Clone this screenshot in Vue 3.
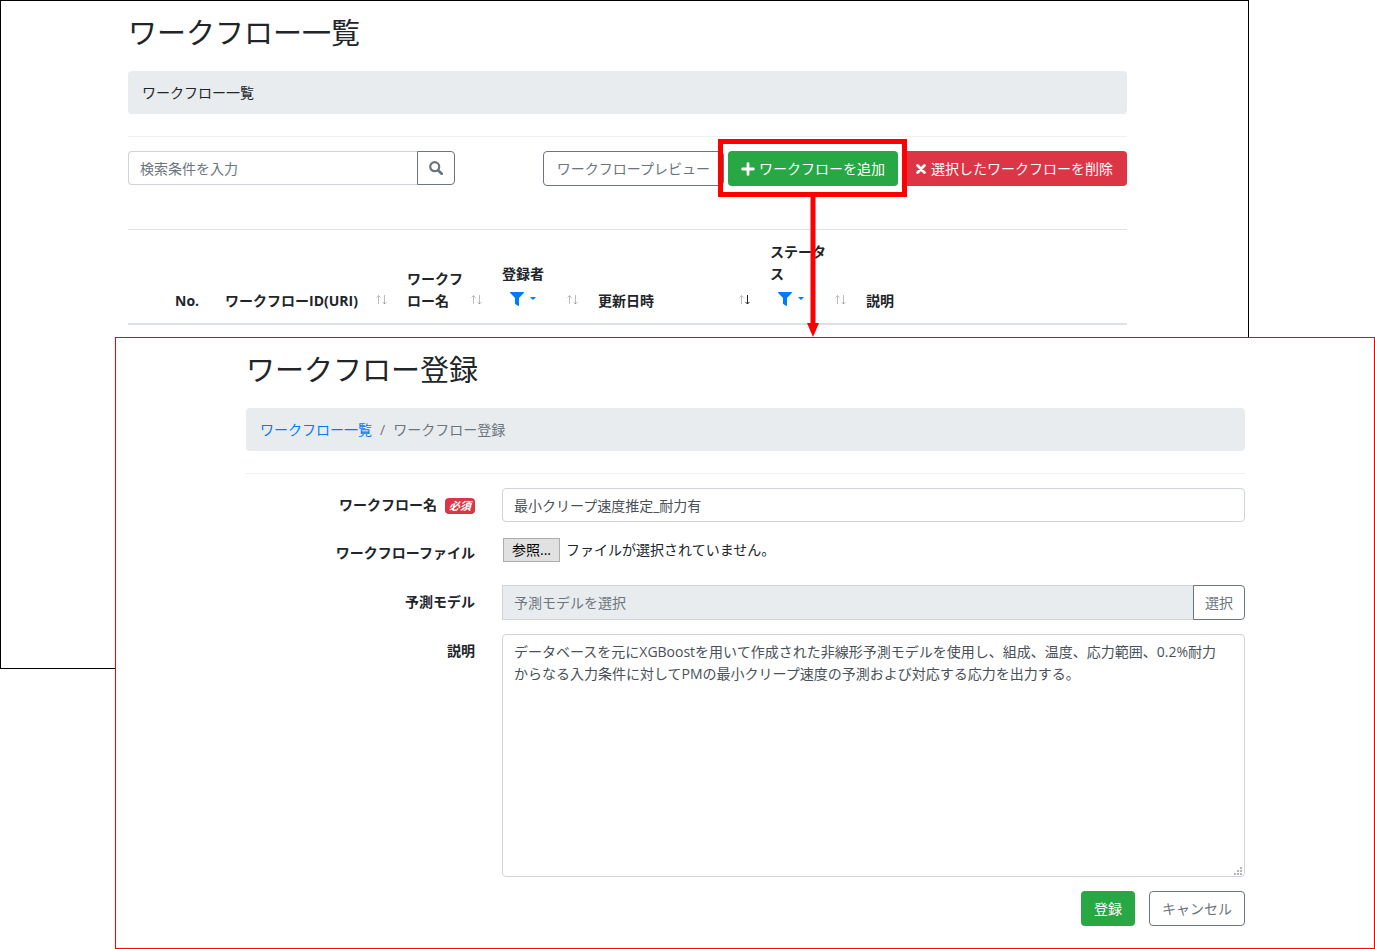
<script setup>
import { ref } from 'vue'

const keyword = ref('')
const name = ref('最小クリープ速度推定_耐力有')
const model = ref('')
const description = ref(
  'データベースを元にXGBoostを用いて作成された非線形予測モデルを使用し、組成、温度、応力範囲、0.2%耐力\nからなる入力条件に対してPMの最小クリープ速度の予測および対応する応力を出力する。'
)

const columns = [
  { key: 'check', label: '' },
  { key: 'no', label: 'No.' },
  { key: 'uri', label: 'ワークフローID(URI)', sort: 'none' },
  { key: 'name', label: 'ワークフロー名', sort: 'none' },
  { key: 'owner', label: '登録者', sort: 'none', filter: true },
  { key: 'updated', label: '更新日時', sort: 'desc' },
  { key: 'status', label: 'ステータス', sort: 'none', filter: true },
  { key: 'note', label: '説明' }
]
</script>

<template>
  <main class="stage">
    <section class="panel list-panel">
      <h1>ワークフロー一覧</h1>
      <nav class="breadcrumb" aria-label="現在位置"><span>ワークフロー一覧</span></nav>
      <hr />
      <div class="toolbar">
        <div class="search">
          <input v-model="keyword" type="text" placeholder="検索条件を入力" aria-label="検索条件" />
          <button type="button" class="btn outline" aria-label="検索">
            <svg width="14" height="14" viewBox="0 0 14 14" fill="none" stroke="currentColor">
              <circle cx="5.7" cy="5.7" r="4.5" stroke-width="2.2" />
              <path d="M9.2 9.2L12.7 12.7" stroke-width="2.7" stroke-linecap="round" />
            </svg>
          </button>
        </div>
        <div class="actions">
          <button type="button" class="btn outline">ワークフロープレビュー</button>
          <div class="callout">
            <button type="button" class="btn green">
              <svg width="14" height="14" viewBox="0 0 14 14" stroke="currentColor" stroke-width="2.8" stroke-linecap="round">
                <path d="M7 1.6V12.4M1.6 7H12.4" />
              </svg>
              <span>ワークフローを追加</span>
            </button>
            <svg class="arrow" width="12" height="140" viewBox="0 0 12 140" fill="#f00">
              <path d="M3.5 0H8.5V126H12L6 140L0 126H3.5Z" />
            </svg>
          </div>
          <button type="button" class="btn red">
            <svg width="10" height="10" viewBox="0 0 10 10" stroke="currentColor" stroke-width="2.8" stroke-linecap="round">
              <path d="M1.6 1.6L8.4 8.4M8.4 1.6L1.6 8.4" />
            </svg>
            <span>選択したワークフローを削除</span>
          </button>
        </div>
      </div>
      <table>
        <thead>
          <tr>
            <th v-for="c in columns" :key="c.key" :class="c.key" scope="col">
              <div class="head">
                <div class="label">
                  {{ c.label }}
                  <button v-if="c.filter" type="button" class="filter" :aria-label="c.label + 'で絞り込み'">
                    <svg width="14" height="14" viewBox="0 0 14 14" fill="currentColor">
                      <path d="M.7 0H13.3C13.9 0 14.2.7 13.8 1.1L9 6V13.2C9 13.8 8.3 14.2 7.8 13.8L5.4 12.1C5.1 11.9 5 11.7 5 11.4V6L.2 1.1C-.2.7.1 0 .7 0Z" />
                    </svg>
                    <svg width="6" height="3" viewBox="0 0 6 3" fill="currentColor"><path d="M0 0H6L3 3Z" /></svg>
                  </button>
                </div>
                <svg v-if="c.sort" class="sort" width="13" height="12" viewBox="0 0 13 12" fill="none" stroke="#212529">
                  <path d="M3.5 10V2M1.5 3.5L3.5 1.5L5.5 3.5" opacity=".3" />
                  <path d="M9.5 1V10M7.5 8L9.5 10L11.5 8" :opacity="c.sort === 'desc' ? 1 : 0.3" />
                </svg>
              </div>
            </th>
          </tr>
        </thead>
      </table>
    </section>

    <section class="panel form-panel">
      <h1>ワークフロー登録</h1>
      <nav class="breadcrumb" aria-label="パンくず">
        <a href="#">ワークフロー一覧</a><span class="sep">/</span><span class="muted">ワークフロー登録</span>
      </nav>
      <hr />
      <form @submit.prevent>
        <label for="wf-name">ワークフロー名<em class="badge">必須</em></label>
        <input id="wf-name" v-model="name" type="text" />

        <label for="wf-file">ワークフローファイル</label>
        <div class="file">
          <input id="wf-file" type="file" />
          <label for="wf-file"><span class="browse">参照...</span><span>ファイルが選択されていません。</span></label>
        </div>

        <label for="wf-model">予測モデル</label>
        <div class="group">
          <input id="wf-model" v-model="model" type="text" placeholder="予測モデルを選択" readonly />
          <button type="button" class="btn outline">選択</button>
        </div>

        <label for="wf-note">説明</label>
        <div class="area">
          <textarea id="wf-note" v-model="description"></textarea>
          <svg class="grip" width="8" height="8" viewBox="0 0 8 8" fill="#b5b5b5">
            <path d="M6 0h2v2H6zM3 3h2v2H3zM6 3h2v2H6zM0 6h2v2H0zM3 6h2v2H3zM6 6h2v2H6z" />
          </svg>
        </div>

        <div class="submit">
          <button type="submit" class="btn green">登録</button>
          <button type="button" class="btn outline">キャンセル</button>
        </div>
      </form>
    </section>
  </main>
</template>

<style>
body {
  background: #fff;
}
</style>

<style scoped>
* {
  box-sizing: border-box;
}
.stage {
  display: grid;
  grid-template-columns: 115px minmax(0, 1fr) 126px;
  grid-template-rows: 337px 332px auto;
  font-family: 'Open Sans', 'Noto Sans CJK JP', sans-serif;
  font-size: 14px;
  line-height: 22px;
  color: #212529;
}
.panel {
  background: #fff;
}
.list-panel {
  grid-area: 1 / 1 / 3 / 3;
  border: 1px solid #000;
  padding: 14px 121px 0 127px;
}
.form-panel {
  grid-area: 2 / 2 / 4 / 4;
  border: 1px solid #f00;
  padding: 14px 129px 22px 130px;
  z-index: 1;
}
h1 {
  margin: 0 0 20px;
  font-size: 29px;
  line-height: 36px;
  font-weight: 400;
}
.breadcrumb {
  display: flex;
  padding: 11px 14px 10px;
  border-radius: 4px;
  background: #e9ecef;
}
.breadcrumb a {
  color: #007bff;
  text-decoration: none;
}
.sep {
  padding: 0 8px;
  color: #6c757d;
}
.muted {
  color: #6c757d;
}
hr {
  height: 1px;
  margin: 22px 0 14px;
  border: 0;
  background: #efefef;
}
button,
input,
textarea {
  font: inherit;
  color: inherit;
  margin: 0;
}
input[type='text'],
textarea {
  display: block;
  width: 100%;
  min-width: 0;
  height: 34px;
  padding: 0 11px;
  border: 1px solid #ced4da;
  border-radius: 4px;
  background: #fff;
  color: #495057;
  outline: 0;
}
input::placeholder {
  color: #6c757d;
  opacity: 1;
}
.btn {
  display: inline-flex;
  flex: none;
  align-items: center;
  justify-content: center;
  gap: 4px;
  height: 35px;
  padding: 0 12px;
  border: 1px solid transparent;
  border-radius: 4px;
  white-space: nowrap;
  cursor: pointer;
}
.outline {
  border-color: #6c757d;
  background: #fff;
  color: #6c757d;
}
.green {
  background: #28a745;
  color: #fff;
}
.red {
  background: #dc3545;
  color: #fff;
}
.toolbar {
  display: flex;
  justify-content: space-between;
}
.search,
.group {
  display: flex;
}
.search {
  width: 327px;
}
.search input,
.group input[type='text'] {
  flex: 1;
  border-right: 0;
  border-radius: 4px 0 0 4px;
}
.search .btn,
.group .btn {
  padding: 0 11px;
  border-radius: 0 4px 4px 0;
}
.search .btn {
  height: 34px;
}
.group input[type='text'] {
  height: 35px;
  border-radius: 0;
  background: #e9ecef;
}
.actions {
  display: flex;
  gap: 4px;
}
.callout {
  position: relative;
}
.callout::after {
  content: '';
  position: absolute;
  inset: -12px -9px -11px -10px;
  border: 5px solid #f00;
  pointer-events: none;
}
.arrow {
  position: absolute;
  top: 46px;
  left: calc(50% - 6px);
}
.actions .outline {
  padding: 0 13px;
}
.actions .red {
  gap: 5px;
  padding: 0 13px;
}
table {
  width: 100%;
  margin-top: 43px;
  border-collapse: collapse;
  table-layout: fixed;
}
th {
  padding: 11px 8px 11px 11px;
  border-top: 1px solid #dee2e6;
  border-bottom: 2px solid #dee2e6;
  text-align: left;
  vertical-align: bottom;
  font-weight: 700;
}
.check {
  width: 36px;
}
.no {
  width: 50px;
  padding-right: 0;
}
.uri {
  width: 182px;
}
.name,
.owner,
.status {
  width: 96px;
}
.name {
  width: 95px;
}
.updated {
  width: 172px;
}
.head {
  display: flex;
  justify-content: space-between;
  align-items: flex-end;
}
.label {
  flex: 1;
}
.sort {
  flex: none;
  margin-bottom: 6px;
}
.filter {
  display: flex;
  align-items: center;
  gap: 6px;
  height: 27px;
  padding: 0 8px;
  border: 0;
  background: none;
  color: #007bff;
  cursor: pointer;
}
form {
  display: grid;
  grid-template-columns: 229px minmax(0, 1fr);
  gap: 14px 27px;
}
form > label {
  padding-top: 6px;
  text-align: right;
  font-weight: 700;
}
.badge {
  display: inline-block;
  margin-left: 8px;
  padding: 0 4px;
  border-radius: 4px;
  background: #dc3545;
  color: #fff;
  font-size: 11px;
  line-height: 16px;
}
.file {
  position: relative;
  height: 35px;
  padding: 2px 1px;
}
.file input {
  position: absolute;
  width: 1px;
  height: 1px;
  opacity: 0;
}
.file label {
  display: flex;
  align-items: center;
  gap: 6px;
}
.browse {
  padding: 0 8px;
  border: 1px solid #adadad;
  background: #e1e1e1;
  color: #000;
}
.area {
  position: relative;
}
.area textarea {
  height: 243px;
  padding: 6px 10px 6px 11px;
  resize: none;
}
.grip {
  position: absolute;
  right: 3px;
  bottom: 2px;
}
.submit {
  grid-column: 2;
  display: flex;
  justify-content: flex-end;
  gap: 14px;
}
</style>
